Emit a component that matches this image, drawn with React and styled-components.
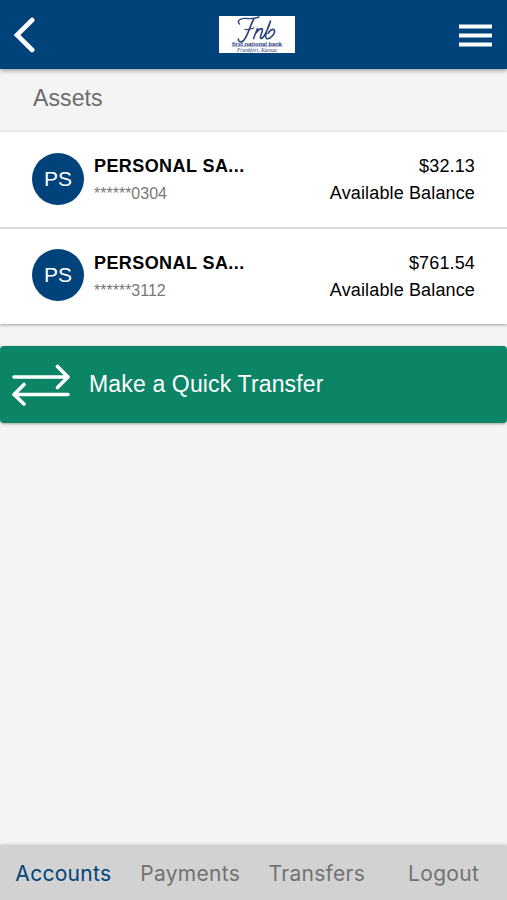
import React from 'react';
import styled, { createGlobalStyle } from 'styled-components';

const colors = {
	primary: '#00427a',
	green: '#0c8567',
	grey: '#f4f4f4',
	tabBar: '#d2d2d2',
	muted: '#727272'
};

const GlobalStyle = createGlobalStyle`
	* {
		box-sizing: border-box;
	}
	body {
		margin: 0;
		background-color: ${colors.grey};
		font-family: "Liberation Sans", Arial, sans-serif;
	}
`
const Page = styled.div`
	display: flex;
	flex-direction: column;
	height: 100vh;
	overflow: hidden;
`
const AppBar = styled.header`
	display: flex;
	align-items: center;
	justify-content: space-between;
	flex-shrink: 0;
	height: 69px;
	padding: 0 15px 0 13px;
	background-color: ${colors.primary};
	box-shadow: 0 1px 5px rgba(0, 0, 0, .45);
`
const IconButton = styled.button`
	display: flex;
	width: 33px;
	padding: 1px 0 0;
	border: none;
	background: transparent;
`
const LogoBox = styled.div`
	display: flex;
	width: 76px;
	height: 37px;
	margin-left: 8px;
	background-color: #fff;
`
const Main = styled.main`
	flex: 1;
`
const SectionTitle = styled.h2`
	height: 63px;
	margin: 0;
	padding: 0 33px;
	color: #6b6b6b;
	font-size: 23px;
	font-weight: 400;
	line-height: 58px;
	letter-spacing: .1px;
`
const AccountList = styled.ul`
	margin: 0;
	padding: 0;
	list-style: none;
	background-color: #fff;
	box-shadow: 0 1px 3px rgba(0, 0, 0, .35);
`
const AccountItem = styled.li`
	display: flex;
	align-items: center;
	height: 95px;
	padding: 0 32px 3px 32px;

	&:not(:last-child) {
		height: 97px;
		padding-bottom: 2px;
		border-bottom: 2px solid #dcdcdc;
	}
`
const Avatar = styled.div`
	display: flex;
	align-items: center;
	justify-content: center;
	width: 52px;
	height: 52px;
	margin-right: 10px;
	border-radius: 50%;
	background-color: ${colors.primary};
	color: #fff;
	font-size: 21px;
`
const Info = styled.div`
	flex: 1;
	padding-top: 3px;
`
const Name = styled.div`
	font-size: 18px;
	font-weight: 700;
	line-height: 27px;
	letter-spacing: .42px;
`
const AccountNumber = styled.div`
	color: #777;
	font-size: 16px;
	line-height: 27px;
`
const Amounts = styled.div`
	padding-top: 3px;
	font-size: 18px;
	line-height: 27px;
	text-align: right;
	letter-spacing: .14px;
`
const TransferButton = styled.button`
	display: flex;
	align-items: center;
	width: 100%;
	height: 77px;
	margin-top: 22px;
	padding: 0 11px;
	border: none;
	border-radius: 4px;
	background-color: ${colors.green};
	box-shadow: 0 1px 3px rgba(0, 0, 0, .35);
	color: #fff;
	font-family: inherit;
	font-size: 23px;
	letter-spacing: .15px;

	svg {
		margin-right: 18px;
	}
`
const TabBar = styled.nav`
	display: grid;
	grid-template-columns: repeat(4, 1fr);
	flex-shrink: 0;
	height: 55px;
	background-color: ${colors.tabBar};
	box-shadow: 0 -1px 2px rgba(0, 0, 0, .12);
`
const Tab = styled.a`
	color: ${props => props.$active ? colors.primary : colors.muted};
	font-family: Inter, sans-serif;
	font-size: 21px;
	line-height: 57px;
	text-align: center;
	letter-spacing: .3px;
`

const BankLogo = () => (
	<svg width="76" height="37" viewBox="0 0 76 37">
		<g fill="none" stroke="#2c4280" strokeLinecap="round" strokeLinejoin="round">
			<path d="M20.500 8C17 4.500 22 2 28 2.500C33 3 37 2 40 1" strokeWidth="1.400" />
			<path d="M35 2.500C31 10 29 19 25 24C23 27 18.500 26 19.500 23" strokeWidth="1.600" />
			<path d="M26 13.500C29 14 32 13 35 12" strokeWidth="1.200" />
			<path d="M34.500 22.500L38.500 12.500M36.500 17.500C39 14 43 11 43.500 13.500C43.500 16 40 22 42 22.500C43.500 22.500 44.500 21 45.500 19.500" strokeWidth="1.600" />
			<path d="M45.500 19.500C48.500 14 50.500 9 51.500 5C49 11 45 21 47.500 22.500C51 24 56.500 17 55.500 14.500C54 12 50.500 14.500 49 17.500" strokeWidth="1.600" />
			<path d="M13 30.200H63" strokeWidth=".5" />
		</g>
		<g fill="#2c4280">
			<text x="13" y="29.500" fontFamily="Liberation Sans, sans-serif" fontWeight="700" fontSize="5.500" textLength="50" lengthAdjust="spacingAndGlyphs">first national bank</text>
			<text x="18" y="35.500" fontFamily="Liberation Serif, serif" fontStyle="italic" fontSize="5.500" textLength="40" lengthAdjust="spacingAndGlyphs">Frankfort, Kansas</text>
		</g>
	</svg>
)

const accounts = [
	{ id: 1, initials: 'PS', name: 'PERSONAL SA...', number: '******0304', balance: '$32.13' },
	{ id: 2, initials: 'PS', name: 'PERSONAL SA...', number: '******3112', balance: '$761.54' }
];

const tabs = ['Accounts', 'Payments', 'Transfers', 'Logout'];

const App = () => {
	return (
		<Page>
			<GlobalStyle />
			<AppBar>
				<IconButton aria-label="Back">
					<svg width="22" height="36" viewBox="0 0 22 36" fill="none" stroke="#fff" strokeWidth="4.600" strokeLinecap="round">
						<path d="M19.200 3L4 18L19.200 33" />
					</svg>
				</IconButton>
				<LogoBox><BankLogo /></LogoBox>
				<IconButton aria-label="Menu">
					<svg width="33" height="23" viewBox="0 0 33 23" fill="none" stroke="#fff" strokeWidth="4">
						<path d="M0 2.500H33M0 11.500H33M0 20.500H33" />
					</svg>
				</IconButton>
			</AppBar>
			<Main>
				<SectionTitle>Assets</SectionTitle>
				<AccountList>
					{accounts.map(account => (
						<AccountItem key={account.id}>
							<Avatar>{account.initials}</Avatar>
							<Info>
								<Name>{account.name}</Name>
								<AccountNumber>{account.number}</AccountNumber>
							</Info>
							<Amounts>
								<div>{account.balance}</div>
								<div>Available Balance</div>
							</Amounts>
						</AccountItem>
					))}
				</AccountList>
				<TransferButton>
					<svg width="60" height="42" viewBox="0 0 60 42" fill="none" stroke="#fff" strokeWidth="3.600" strokeLinecap="round" strokeLinejoin="round">
						<path d="M3 13H57M46.500 2.500L57 13L46.500 23.500" />
						<path d="M57 30.500H3M13 20.500L3 30.500L13 40" />
					</svg>
					Make a Quick Transfer
				</TransferButton>
			</Main>
			<TabBar>
				{tabs.map((tab, index) => <Tab key={tab} $active={index === 0}>{tab}</Tab>)}
			</TabBar>
		</Page>
	)
}

export default App
